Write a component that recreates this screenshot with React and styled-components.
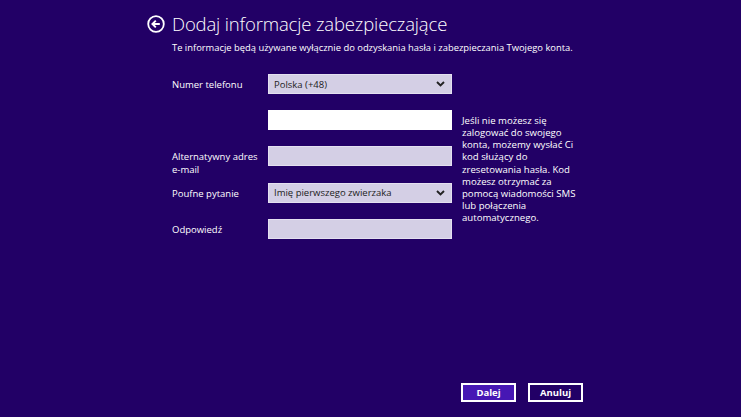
import React from "react"
import styled, { createGlobalStyle } from "styled-components"

const GlobalStyle = createGlobalStyle`
*{
  margin:0;
  padding:0;
  box-sizing:border-box;
}
html,body,#root{
  height:100%;
}
body{
  background-color:#220066;
  color:#fff;
  font-family:"Open Sans","Noto Sans",sans-serif;
  overflow:hidden;
}
`

const Page = styled.div`
height:100%;
display:flex;
flex-direction:column;
padding:13px 158px 15px 147px;
`

const Header = styled.div`
display:flex;
align-items:center;
gap:7px;
height:22px;
`

const Title = styled.h1`
font-size:18.5px;
font-weight:300;
letter-spacing:-0.15px;
line-height:22px;
`

const Subtitle = styled.p`
margin:6px 0 0 25px;
font-size:9.4px;
line-height:14px;
`

const Form = styled.div`
margin:19px 0 0 25px;
display:grid;
grid-template-columns:96px 184px 104px;
grid-template-rows:repeat(5,20px);
row-gap:16.2px;
`

const Label = styled.div`
grid-column:1;
font-size:9.5px;
line-height:13px;
padding-top:4px;
white-space:nowrap;
`

const Field = styled.div`
grid-column:2;
height:20px;
background:${p => (p.$white ? "#ffffff" : "#d4cfe5")};
border:1px solid ${p => (p.$white ? "#ffffff" : "#e4e0f0")};
display:flex;
align-items:center;
justify-content:space-between;
padding:0 6px 0 5px;
font-size:9.5px;
color:#1c1c1c;
`

const Help = styled.div`
grid-column:3;
grid-row:2 / span 4;
margin-left:10px;
padding-top:5px;
font-size:9.6px;
line-height:12.1px;
white-space:nowrap;
`

const Footer = styled.div`
margin-top:auto;
display:flex;
justify-content:flex-end;
gap:12px;
`

const Button = styled.button`
width:55px;
height:19px;
border:2px solid #fff;
background:${p => (p.$primary ? "#4617b4" : "transparent")};
color:#fff;
font-family:inherit;
font-size:9.5px;
font-weight:700;
`

const BackIcon = () => (
  <svg width="18" height="18" viewBox="0 0 18 18">
    <circle cx="9" cy="9" r="7.8" fill="none" stroke="#fff" strokeWidth="1.8" />
    <path d="M12.8 9H5.6M8.8 5.6L5.4 9l3.4 3.4" fill="none" stroke="#fff" strokeWidth="1.9" />
  </svg>
)

const Chevron = () => (
  <svg width="9" height="6" viewBox="0 0 9 6">
    <path d="M1 1l3.5 3.5L8 1" fill="none" stroke="#222" strokeWidth="1.9" />
  </svg>
)

const helpLines = [
  "Jeśli nie możesz się",
  "zalogować do swojego",
  "konta, możemy wysłać Ci",
  "kod służący do",
  "zresetowania hasła. Kod",
  "możesz otrzymać za",
  "pomocą wiadomości SMS",
  "lub połączenia",
  "automatycznego.",
]

class App extends React.Component {
  render() {
    return (
      <>
        <GlobalStyle />
        <Page>
          <Header>
            <BackIcon />
            <Title>Dodaj informacje zabezpieczające</Title>
          </Header>
          <Subtitle>
            Te informacje będą używane wyłącznie do odzyskania hasła i zabezpieczania Twojego konta.
          </Subtitle>
          <Form>
            <Label style={{ gridRow: 1 }}>Numer telefonu</Label>
            <Field style={{ gridRow: 1 }}>
              Polska (+48)
              <Chevron />
            </Field>
            <Field $white style={{ gridRow: 2 }} />
            <Help>
              {helpLines.map(l => (
                <div key={l}>{l}</div>
              ))}
            </Help>
            <Label style={{ gridRow: 3 }}>
              Alternatywny adres
              <br />
              e-mail
            </Label>
            <Field style={{ gridRow: 3 }} />
            <Label style={{ gridRow: 4 }}>Poufne pytanie</Label>
            <Field style={{ gridRow: 4 }}>
              Imię pierwszego zwierzaka
              <Chevron />
            </Field>
            <Label style={{ gridRow: 5 }}>Odpowiedź</Label>
            <Field style={{ gridRow: 5 }} />
          </Form>
          <Footer>
            <Button $primary>Dalej</Button>
            <Button>Anuluj</Button>
          </Footer>
        </Page>
      </>
    )
  }
}

export default App
